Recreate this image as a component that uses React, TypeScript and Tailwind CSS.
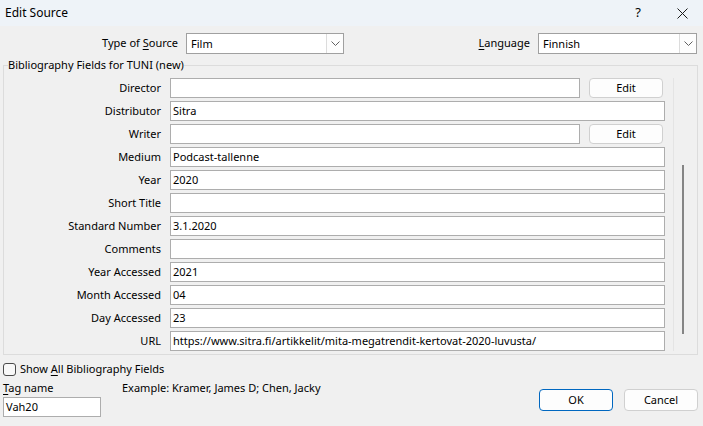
import React from 'react'

const font = { fontFamily: '"Noto Sans", "Segoe UI", sans-serif' }

interface Field {
  label: string
  value: string
  edit?: boolean
}

const fields: Field[] = [
  { label: 'Director', value: '', edit: true },
  { label: 'Distributor', value: 'Sitra' },
  { label: 'Writer', value: '', edit: true },
  { label: 'Medium', value: 'Podcast-tallenne' },
  { label: 'Year', value: '2020' },
  { label: 'Short Title', value: '' },
  { label: 'Standard Number', value: '3.1.2020' },
  { label: 'Comments', value: '' },
  { label: 'Year Accessed', value: '2021' },
  { label: 'Month Accessed', value: '04' },
  { label: 'Day Accessed', value: '23' },
  { label: 'URL', value: 'https://www.sitra.fi/artikkelit/mita-megatrendit-kertovat-2020-luvusta/' },
]

function Combo({ value, width }: { value: string; width: string }) {
  return (
    <div className={`flex h-[21px] border border-[#a0a0a0] bg-white ${width}`}>
      <div className="flex-1 pl-[4px] leading-[19px] truncate">{value}</div>
      <div className="flex w-[17px] items-center justify-center border-l border-[#dcdcdc] bg-[#fdfdfd]">
        <svg width="9" height="5" viewBox="0 0 9 5">
          <path d="M0.5 0.5 L4.5 4.5 L8.5 0.5" fill="none" stroke="#606060" strokeWidth="1" />
        </svg>
      </div>
    </div>
  )
}

function TextBox({ value, className = '' }: { value: string; className?: string }) {
  return (
    <div className={`h-[20px] border border-[#adadad] bg-white pl-[2px] leading-[18px] whitespace-nowrap overflow-hidden ${className}`}>
      {value}
    </div>
  )
}

export default function App() {
  return (
    <div className="w-[703px] h-[426px] overflow-hidden bg-[#f0f0f0] text-[11px] text-black" style={font}>
      {/* Title bar */}
      <div className="flex h-[26px] items-center bg-[#eef3f8]">
        <div className="pl-[5px] flex-1 text-[12px]">Edit Source</div>
        <div className="flex h-full w-[46px] items-center justify-center text-[13px]">?</div>
        <div className="flex h-full w-[42px] items-center justify-center">
          <svg width="11" height="11" viewBox="0 0 11 11">
            <path d="M0.5 0.5 L10.5 10.5 M10.5 0.5 L0.5 10.5" stroke="#1a1a1a" strokeWidth="1" />
          </svg>
        </div>
      </div>

      {/* Source type + language */}
      <div className="flex items-center pt-[7px] pr-[6px]">
        <div className="w-[178px] text-right">
          Type of <span className="underline underline-offset-2">S</span>ource
        </div>
        <div className="ml-[8px]">
          <Combo value="Film" width="w-[158px]" />
        </div>
        <div className="flex-1" />
        <div>
          <span className="underline underline-offset-2">L</span>anguage
        </div>
        <div className="ml-[8px]">
          <Combo value="Finnish" width="w-[159px]" />
        </div>
      </div>

      {/* Bibliography fields */}
      <fieldset className="ml-[3px] mr-[5px] mt-[3px] border border-[#dcdcdc] pb-[3px]">
        <legend className="ml-[4px] leading-[16px]">Bibliography Fields for TUNI (new)</legend>
        <div className="flex pt-[5px]">
          <div className="flex flex-1 flex-col gap-[3px]">
            {fields.map((f) => (
              <div key={f.label} className="flex items-center">
                <div className="w-[157px] text-right leading-[20px]">{f.label}</div>
                <div className="ml-[9px] flex flex-1 items-center">
                  <TextBox value={f.value} className="flex-1" />
                  {f.edit && (
                    <button className="ml-[9px] mr-[2px] h-[20px] w-[74px] rounded-[4px] border border-[#d0d0d0] bg-[#fdfdfd] leading-[18px]">
                      Edit
                    </button>
                  )}
                </div>
              </div>
            ))}
          </div>
          <div className="ml-[8px] w-[24px] border-l border-[#e4e4e4]">
            <div className="ml-[8px] mt-[87px] h-[169px] w-[2px] bg-[#858585]" />
          </div>
        </div>
      </fieldset>

      {/* Show all */}
      <div className="mt-[7px] flex items-center px-[3px]">
        <div className="h-[13px] w-[13px] rounded-[3px] border border-[#4a4a4a] bg-[#f8f8f8]" />
        <div className="ml-[4px] leading-[14px]">
          Show <span className="underline underline-offset-2">A</span>ll Bibliography Fields
        </div>
      </div>

      {/* Tag name + buttons */}
      <div className="mt-[4px] flex pl-[3px] pr-[5px]">
        <div className="flex w-[98px] flex-col">
          <div className="leading-[16px]">
            <span className="underline underline-offset-2">T</span>ag name
          </div>
          <TextBox value="Vah20" className="mt-[1px] w-[98px] pl-[2px]" />
        </div>
        <div className="ml-[21px] leading-[16px]">Example: Kramer, James D; Chen, Jacky</div>
        <div className="ml-auto mt-[9px] flex gap-[11px]">
          <button className="h-[22px] w-[74px] rounded-[4px] border border-[#0067c0] bg-[#fdfdfd]">OK</button>
          <button className="h-[22px] w-[74px] rounded-[4px] border border-[#d0d0d0] bg-[#fdfdfd]">Cancel</button>
        </div>
      </div>
    </div>
  )
}
